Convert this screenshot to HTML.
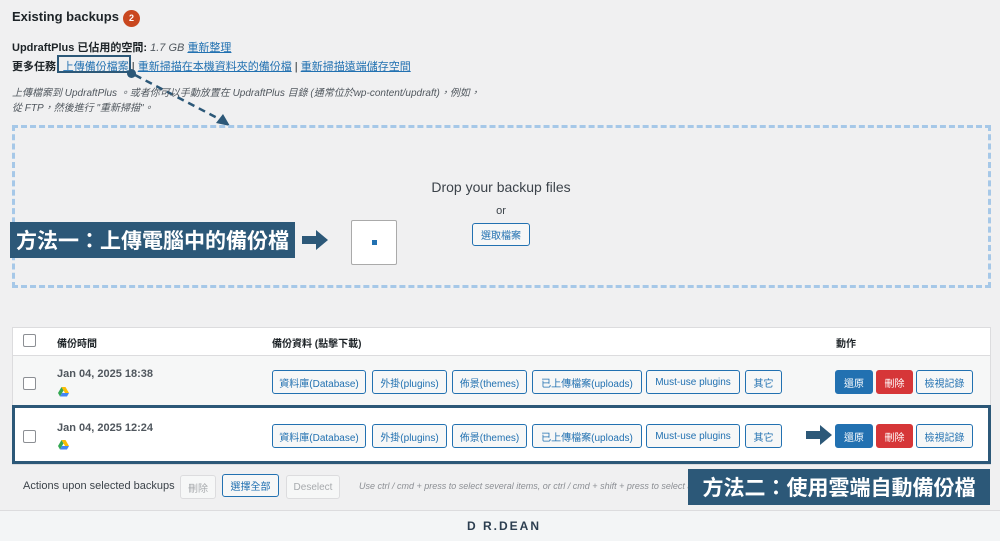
<!DOCTYPE html>
<html><head><meta charset="utf-8"><style>
*{margin:0;padding:0;box-sizing:border-box}
body{width:1000px;height:541px;background:#f0f0f1;font-family:"Liberation Sans","Noto Sans CJK TC",sans-serif;color:#1d2327;position:relative;overflow:hidden;font-size:11px}
.a{position:absolute;white-space:nowrap}
a,.lk{color:#2271b1;text-decoration:underline;font-weight:normal}
.btn{position:absolute;height:24px;border:1px solid #2271b1;border-radius:3px;background:#f6f7f7;color:#2271b1;font-size:10px;display:flex;align-items:center;justify-content:center;white-space:nowrap}
.cb{position:absolute;width:13px;height:13px;border:1px solid #8c8f94;background:#fff;border-radius:2px}
.lab{position:absolute;background:#2c5878;color:#fff;font-weight:bold;font-size:21px;display:flex;align-items:center;justify-content:center;white-space:nowrap}
</style></head><body>
<div class="a" style="left:12px;top:9px;font-size:13px;font-weight:bold">Existing backups</div>
<div class="a" style="left:123px;top:10px;width:17px;height:17px;border-radius:50%;background:#c9471f;color:#fff;font-size:9px;font-weight:bold;text-align:center;line-height:17px">2</div>
<div class="a" style="left:12px;top:39px"><b>UpdraftPlus 已佔用的空間:</b> <i style="color:#50575e">1.7 GB</i> <span class="lk">重新整理</span></div>
<div class="a" style="left:12px;top:58px"><b>更多任務:</b> <span class="lk">上傳備份檔案</span> | <span class="lk">重新掃描在本機資料夾的備份檔</span> | <span class="lk">重新掃描遠端儲存空間</span></div>
<div class="a" style="left:57px;top:55px;width:74px;height:18px;border:2px solid #2c5878"></div>
<div class="a" style="left:127px;top:69px;width:9px;height:9px;border-radius:50%;background:#2c5878"></div>
<svg class="a" style="left:130px;top:72px" width="105" height="60"><line x1="5" y1="3" x2="95" y2="50" stroke="#2c5878" stroke-width="2.5" stroke-dasharray="7,5"/><polygon points="100,54 86,51 93,42" fill="#2c5878"/></svg>
<div class="a" style="left:12px;top:86px;font-size:10px;font-style:italic;color:#50575e;line-height:15px">上傳檔案到 UpdraftPlus 。或者你可以手動放置在 UpdraftPlus 目錄 (通常位於wp-content/updraft)，例如，<br>從 FTP，然後進行 "重新掃描"。</div>
<div class="a" style="left:12px;top:125px;width:979px;height:163px;border:3px dashed #a6c8e8"></div>
<div class="a" style="left:0;width:1002px;top:179px;text-align:center;font-size:14px;color:#3c434a">Drop your backup files</div>
<div class="a" style="left:0;width:1002px;top:205px;text-align:center;font-size:11px;color:#3c434a">or</div>
<div class="btn" style="left:472px;top:223px;width:58px;height:23px">選取檔案</div>
<div class="lab" style="left:10px;top:222px;width:285px;height:36px">方法一：上傳電腦中的備份檔</div>
<svg class="a" style="left:300px;top:229px" width="30" height="22"><path d="M2 7h14V1l12 10-12 10v-6H2z" fill="#2c5878"/></svg>
<div class="a" style="left:351px;top:220px;width:46px;height:45px;background:#fff;border:1px solid #aaa;border-radius:2px"><div style="position:absolute;left:20px;top:19px;width:5px;height:5px;background:#2271b1"></div></div>

<div class="a" style="left:12px;top:327px;width:979px;height:138px;background:#fff;border:1px solid #dcdcde"></div>
<div class="a" style="left:13px;top:355px;width:977px;height:1px;background:#dcdcde"></div>
<div class="a" style="left:13px;top:356px;width:977px;height:49px;background:#f6f7f7"></div>
<div class="cb" style="left:23px;top:334px"></div>
<div class="a" style="left:57px;top:335px;font-weight:bold;font-size:10px">備份時間</div>
<div class="a" style="left:272px;top:335px;font-weight:bold;font-size:10px">備份資料 (點擊下載)</div>
<div class="a" style="left:836px;top:335px;font-weight:bold;font-size:10px">動作</div>

<div class="cb" style="left:23px;top:377px"></div>
<div class="a" style="left:57px;top:368px;font-weight:bold;color:#50575e">Jan 04, 2025 18:38</div>
<svg class="a" style="left:58px;top:387px" width="11" height="10"><path d="M3.5 0h4l3.5 6h-4z" fill="#fbbc04"/><path d="M3.5 0L0 6l2 3.5 3.5-6z" fill="#34a853"/><path d="M2 9.5h7l2-3.5H4z" fill="#4285f4"/></svg>
<div class="a" style="left:12px;top:405px;width:979px;height:59px;border:3px solid #2c5878;background:#fff"></div>
<div class="cb" style="left:23px;top:430px"></div>
<div class="a" style="left:57px;top:422px;font-weight:bold;color:#50575e">Jan 04, 2025 12:24</div>
<svg class="a" style="left:58px;top:440px" width="11" height="10"><path d="M3.5 0h4l3.5 6h-4z" fill="#fbbc04"/><path d="M3.5 0L0 6l2 3.5 3.5-6z" fill="#34a853"/><path d="M2 9.5h7l2-3.5H4z" fill="#4285f4"/></svg>

<div class="btn" style="left:272px;top:370px;width:94px">資料庫(Database)</div>
<div class="btn" style="left:372px;top:370px;width:75px">外掛(plugins)</div>
<div class="btn" style="left:452px;top:370px;width:75px">佈景(themes)</div>
<div class="btn" style="left:532px;top:370px;width:110px">已上傳檔案(uploads)</div>
<div class="btn" style="left:646px;top:370px;width:94px">Must-use plugins</div>
<div class="btn" style="left:745px;top:370px;width:37px">其它</div>
<div class="btn" style="left:835px;top:370px;width:38px;background:#2271b1;color:#fff">還原</div>
<div class="btn" style="left:876px;top:370px;width:37px;background:#d63638;border-color:#d63638;color:#fff">刪除</div>
<div class="btn" style="left:916px;top:370px;width:57px">檢視記錄</div>

<div class="btn" style="left:272px;top:424px;width:94px">資料庫(Database)</div>
<div class="btn" style="left:372px;top:424px;width:75px">外掛(plugins)</div>
<div class="btn" style="left:452px;top:424px;width:75px">佈景(themes)</div>
<div class="btn" style="left:532px;top:424px;width:110px">已上傳檔案(uploads)</div>
<div class="btn" style="left:646px;top:424px;width:94px">Must-use plugins</div>
<div class="btn" style="left:745px;top:424px;width:37px">其它</div>
<svg class="a" style="left:804px;top:425px" width="30" height="20"><path d="M2 6h14V0l12 10-12 10v-6H2z" fill="#2c5878"/></svg>
<div class="btn" style="left:835px;top:424px;width:38px;background:#2271b1;color:#fff">還原</div>
<div class="btn" style="left:876px;top:424px;width:37px;background:#d63638;border-color:#d63638;color:#fff">刪除</div>
<div class="btn" style="left:916px;top:424px;width:57px">檢視記錄</div>

<div class="a" style="left:23px;top:480px;font-size:11px;color:#3c434a">Actions upon selected backups</div>
<div class="btn" style="left:180px;top:475px;width:36px;color:#a7aaad;border-color:#dcdcde">刪除</div>
<div class="btn" style="left:222px;top:474px;width:57px;height:23px">選擇全部</div>
<div class="btn" style="left:286px;top:475px;width:54px;color:#a7aaad;border-color:#dcdcde">Deselect</div>
<div class="a" style="left:359px;top:481px;font-size:9px;font-style:italic;color:#8c8f94">Use ctrl / cmd + press to select several items, or ctrl / cmd + shift + press to select all in between</div>
<div class="lab" style="left:688px;top:469px;width:302px;height:36px">方法二：使用雲端自動備份檔</div>

<div class="a" style="left:0;top:510px;width:1000px;height:31px;background:#f3f5f6;border-top:1px solid #dcdcde"></div>
<div class="a" style="left:467px;top:519px;font-size:12px;font-weight:bold;letter-spacing:2px;color:#2c3e50">D R.DEAN</div>
</body></html>
